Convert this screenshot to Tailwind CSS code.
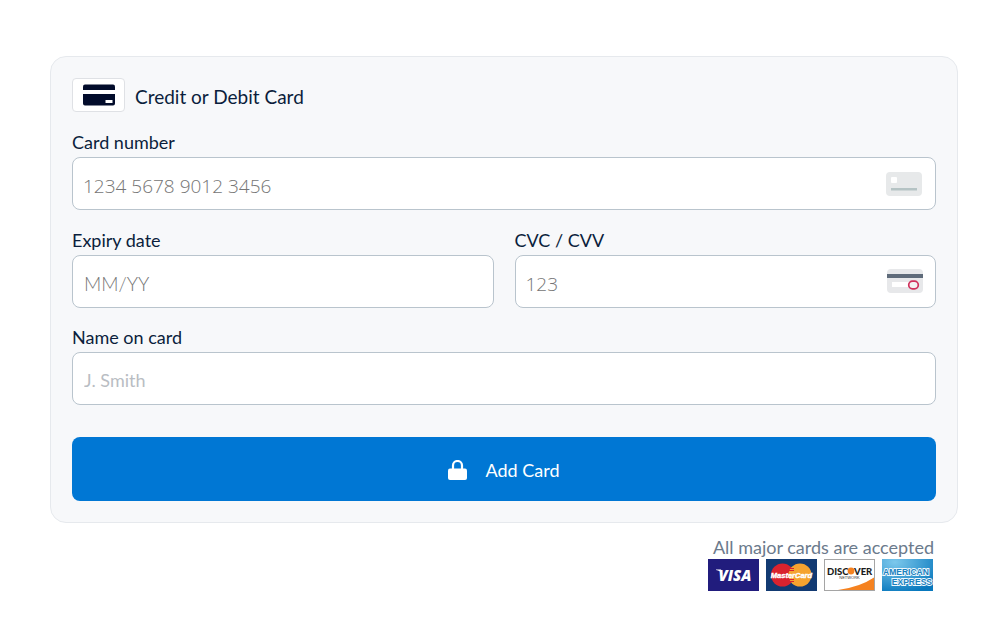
<!DOCTYPE html>
<html lang="en">
<head>
<meta charset="utf-8">
<meta name="viewport" content="width=device-width, initial-scale=1">
<title>Add Card</title>
<script src="https://cdn.jsdelivr.net/npm/@tailwindcss/browser@4"></script>
</head>
<body class="bg-white pt-14 pr-[42px] pb-8 pl-[50px] font-['Lato',sans-serif] text-[#0b1e3c]">
<main>
  <form class="rounded-2xl border border-[#e6e9ed] bg-[#f7f8fa] p-[21px]">
    <div class="flex items-center gap-2.5">
      <span class="flex h-[34px] w-[53px] items-center justify-center rounded-sm border border-[#dfe1e5] bg-white">
        <svg class="h-[22px] w-8" viewBox="0 0 32 22" fill="#020c2b" aria-hidden="true">
          <path d="M2 0.500H30Q32 .5 32 2.500V6H0V2.500Q0 .5 2 .5Z"/>
          <path fill-rule="evenodd" d="M0 10H32V19.500Q32 21.500 30 21.500H2Q0 21.500 0 19.500ZM22.500 16V19H29.500V16Z"/>
        </svg>
      </span>
      <h1 class="pt-1 text-[19px] leading-6">Credit or Debit Card</h1>
    </div>

    <div class="mt-[19px]">
      <label for="number" class="mb-1 block text-lg leading-[22px]">Card number</label>
      <div class="relative">
        <input id="number" type="text" placeholder="1234 5678 9012 3456" class="block h-[53px] w-full rounded-lg border border-[#b9c4cd] bg-white pt-1 pr-14 pl-2.5 font-['Open_Sans',sans-serif] text-[19px] font-light placeholder:text-[#757575]">
        <svg class="absolute top-[15px] right-3.5 h-6 w-9" viewBox="0 0 36 24" aria-hidden="true">
          <rect width="36" height="24" rx="4" fill="#e7e9ea"/>
          <rect x="5" y="5" width="6" height="6" rx="1" fill="#fff"/>
          <rect x="5" y="16" width="26" height="2.500" fill="#b5c3c4"/>
        </svg>
      </div>
    </div>

    <div class="mt-[19px] grid grid-cols-2 gap-[21px]">
      <div>
        <label for="expiry" class="mb-1 block text-lg leading-[22px]">Expiry date</label>
        <input id="expiry" type="text" placeholder="MM/YY" class="block h-[53px] w-full rounded-lg border border-[#b9c4cd] bg-white px-[11px] pt-1 text-[19px] font-light placeholder:text-[#757575]">
      </div>
      <div>
        <label for="cvc" class="mb-1 block text-lg leading-[22px]">CVC / CVV</label>
        <div class="relative">
          <input id="cvc" type="text" placeholder="123" class="block h-[53px] w-full rounded-lg border border-[#b9c4cd] bg-white pt-1 pr-14 pl-2.5 font-['Open_Sans',sans-serif] text-[19px] font-light placeholder:text-[#757575]">
          <svg class="absolute top-3.5 right-[13px] h-6 w-9" viewBox="0 0 36 24" aria-hidden="true">
            <rect width="36" height="24" rx="4" fill="#e7e8ea"/>
            <rect y="5" width="36" height="4" fill="#5f6b7a"/>
            <rect x="5" y="13" width="18" height="5" fill="#fff"/>
            <rect x="21.700" y="12.200" width="9.600" height="7.600" rx="3.800" fill="#f3f1f3" stroke="#d0305c" stroke-width="1.700"/>
          </svg>
        </div>
      </div>
    </div>

    <div class="mt-[18px]">
      <label for="name" class="mb-1 block text-lg leading-[22px]">Name on card</label>
      <input id="name" type="text" placeholder="J. Smith" class="block h-[53px] w-full rounded-lg border border-[#b9c4cd] bg-white px-[11px] pt-0.5 text-lg placeholder:text-[#b9bdc3]">
    </div>

    <button type="button" class="mt-8 flex h-16 w-full items-center justify-center gap-[18px] rounded-lg bg-[#0077d4] pt-0.5 text-lg text-white">
      <svg class="h-5 w-[19px]" viewBox="0 0 19 20" aria-hidden="true">
        <path d="M5 10V5.500a4.500 4.500 0 0 1 9 0V10" fill="none" stroke="#fff" stroke-width="2.200"/>
        <rect y="8.500" width="19" height="11.500" rx="2" fill="#fff"/>
      </svg>
      <span>Add Card</span>
    </button>
  </form>

  <section class="mt-3 flex flex-col items-end pr-6">
    <p class="text-lg leading-6 text-[#6b7a8c]">All major cards are accepted</p>
    <div class="flex gap-[7px] pr-px">
      <svg class="h-8 w-[51px]" viewBox="0 0 51 32" role="img" aria-label="Visa">
        <rect width="51" height="32" fill="#211c7d"/>
        <text x="27" y="22" text-anchor="middle" font-family="Open Sans, sans-serif" font-size="15" font-weight="800" font-style="italic" fill="#fff">VISA</text>
        <path d="M8 10.500H13L14.500 15Q12 11.500 8 11Z" fill="#fff"/>
      </svg>
      <svg class="h-8 w-[51px]" viewBox="0 0 51 32" role="img" aria-label="MasterCard">
        <rect width="51" height="32" fill="#123a72"/>
        <circle cx="16.500" cy="16" r="11.500" fill="#d9232e"/>
        <circle cx="34" cy="16" r="11.500" fill="#f5a32f"/>
        <path d="M24 9.500H28M23 11.500H28M23 20.500H28M24 22.500H28" stroke="#d9232e"/>
        <text x="25.500" y="19" text-anchor="middle" font-family="Liberation Sans, sans-serif" font-size="7.500" font-weight="700" font-style="italic" fill="#fff" stroke="#fff" stroke-width=".4">MasterCard</text>
      </svg>
      <svg class="h-8 w-[51px]" viewBox="0 0 51 32" role="img" aria-label="Discover Network">
        <rect x=".5" y=".5" width="50" height="31" fill="#fff" stroke="#a5a5a5"/>
        <path d="M50 18.500Q36 28 14 31H50Z" fill="#f58220"/>
        <g font-family="Lato, sans-serif" font-weight="900" font-size="9.500" fill="#1b1b1b">
          <text x="3" y="15.500">DISC</text><text x="30" y="15.500">VER</text>
        </g>
        <circle cx="27" cy="12" r="3.400" fill="#f58220"/>
        <text x="25.500" y="20" text-anchor="middle" font-family="Liberation Sans, sans-serif" font-size="4" fill="#333">NETWORK</text>
      </svg>
      <svg class="h-8 w-[51px]" viewBox="0 0 51 32" role="img" aria-label="American Express">
        <defs><radialGradient id="amex" cx="0.250" cy="0.100" r="1"><stop offset="0" stop-color="#7cc8ec"/><stop offset="1" stop-color="#0878bd"/></radialGradient></defs>
        <rect width="51" height="32" fill="url(#amex)"/>
        <g font-family="Liberation Sans, sans-serif" font-weight="700" font-size="8.500" fill="#1a80bd" stroke="#eef8fd" stroke-width="1.800" paint-order="stroke">
          <text x="1" y="16">AMERICAN</text><text x="50" y="26" text-anchor="end">EXPRESS</text>
        </g>
      </svg>
    </div>
  </section>
</main>
</body>
</html>
